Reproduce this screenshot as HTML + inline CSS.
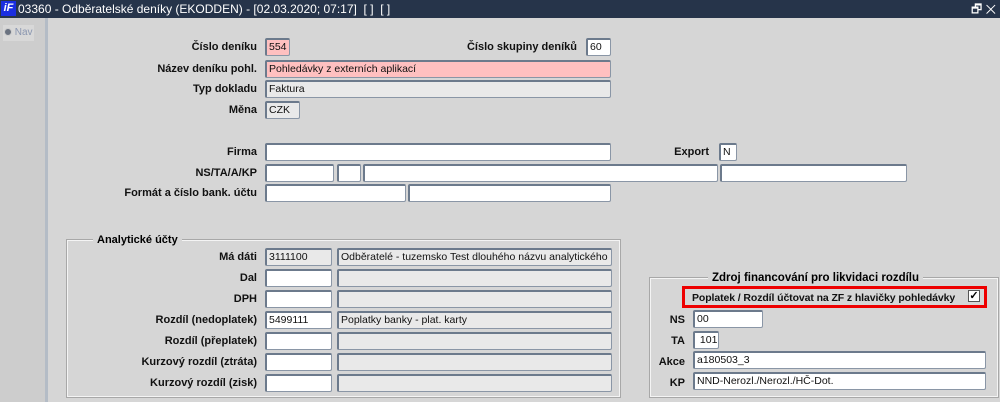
<!DOCTYPE html>
<html><head><meta charset="utf-8"><style>
*{margin:0;padding:0;box-sizing:border-box}
body{width:1000px;height:402px;background:#d6d6d6;position:relative;overflow:hidden;font-family:"Liberation Sans",Arial,sans-serif}
.t{position:absolute;left:0;top:0;width:1000px;height:18px;background:#26344a;color:#fff;font-size:12px;line-height:18px;padding-left:18px;white-space:nowrap}
.logo{position:absolute;left:1px;top:1px;width:15px;height:15px;background:#1a2ee0;color:#fff;font-weight:bold;font-style:italic;font-size:11px;line-height:15px;text-align:center;padding:0}
.nav{position:absolute;left:0;top:18px;width:48px;height:384px;background:#cdcdcd;border-right:3px solid #b4bcc6}
.l{position:absolute;font-size:11px;font-weight:bold;color:#111;text-align:right;white-space:nowrap;line-height:14px}
.i{position:absolute;height:18px;background:#fff;border:1px solid #8a96a6;border-top:2px solid #6c7a8c;border-left:2px solid #6c7a8c;border-radius:2px;font-size:10.5px;line-height:14px;padding-left:2px;white-space:nowrap;overflow:hidden;color:#111}
.g{background:#e9e9e9}.p{background:#ffc0c0}
.box{position:absolute;border:1px solid #f4f4f4;outline:1px solid #a8a8a8}
.gt{position:absolute;font-size:11px;font-weight:bold;background:#d6d6d6;padding:0 4px;line-height:13px}
</style></head><body>
<div class="t"><div class="logo">iF</div>03360 - Odběratelské deníky (EKODDEN) - [02.03.2020; 07:17] &nbsp;[ ] &nbsp;[ ]<span style="position:absolute;right:4px;top:0;font-size:12px">🗗 ✕</span></div>
<div class="nav"><div style="position:absolute;left:3px;top:7px;width:31px;height:16px;background:#d8d8d8;font-size:10px;color:#8a96b0;line-height:16px;padding-left:1px"><span style="display:inline-block;width:8px;height:8px;border-radius:50%;background:#6a7280;border:1px solid #ccc;vertical-align:-1px"></span> Nav</div></div>

<div class="l" style="right:743px;top:40px">Číslo deníku</div>
<div class="i p" style="left:265px;top:38px;width:25px">554</div>
<div class="l" style="right:423px;top:40px">Číslo skupiny deníků</div>
<div class="i" style="left:586px;top:38px;width:25px">60</div>
<div class="l" style="right:743px;top:62px">Název deníku pohl.</div>
<div class="i p" style="left:265px;top:60px;width:346px">Pohledávky z externích aplikací</div>
<div class="l" style="right:743px;top:82px">Typ dokladu</div>
<div class="i g" style="left:265px;top:80px;width:346px">Faktura</div>
<div class="l" style="right:743px;top:103px">Měna</div>
<div class="i g" style="left:265px;top:101px;width:35px">CZK</div>

<div class="l" style="right:743px;top:145px">Firma</div>
<div class="i" style="left:265px;top:143px;width:346px"></div>
<div class="l" style="right:291px;top:145px">Export</div>
<div class="i" style="left:719px;top:143px;width:18px">N</div>
<div class="l" style="right:743px;top:166px">NS/TA/A/KP</div>
<div class="i" style="left:265px;top:164px;width:69px"></div>
<div class="i" style="left:337px;top:164px;width:24px"></div>
<div class="i" style="left:363px;top:164px;width:355px"></div>
<div class="i" style="left:720px;top:164px;width:187px"></div>
<div class="l" style="right:743px;top:186px">Formát a číslo bank. účtu</div>
<div class="i" style="left:265px;top:184px;width:141px"></div>
<div class="i" style="left:408px;top:184px;width:203px"></div>

<div class="box" style="left:67px;top:240px;width:553px;height:157px"></div>
<div class="gt" style="left:93px;top:234px">Analytické účty</div>
<div class="l" style="right:743px;top:250px">Má dáti</div>
<div class="i g" style="left:265px;top:248px;width:67px">3111100</div>
<div class="i g" style="left:337px;top:248px;width:275px">Odběratelé - tuzemsko Test dlouhého názvu analytického &nbsp;úč</div>
<div class="l" style="right:743px;top:271px">Dal</div>
<div class="i" style="left:265px;top:269px;width:67px"></div>
<div class="i g" style="left:337px;top:269px;width:275px"></div>
<div class="l" style="right:743px;top:292px">DPH</div>
<div class="i" style="left:265px;top:290px;width:67px"></div>
<div class="i g" style="left:337px;top:290px;width:275px"></div>
<div class="l" style="right:743px;top:313px">Rozdíl (nedoplatek)</div>
<div class="i" style="left:265px;top:311px;width:67px">5499111</div>
<div class="i g" style="left:337px;top:311px;width:275px">Poplatky banky - plat. karty</div>
<div class="l" style="right:743px;top:334px">Rozdíl (přeplatek)</div>
<div class="i" style="left:265px;top:332px;width:67px"></div>
<div class="i g" style="left:337px;top:332px;width:275px"></div>
<div class="l" style="right:743px;top:355px">Kurzový rozdíl (ztráta)</div>
<div class="i" style="left:265px;top:353px;width:67px"></div>
<div class="i g" style="left:337px;top:353px;width:275px"></div>
<div class="l" style="right:743px;top:376px">Kurzový rozdíl (zisk)</div>
<div class="i" style="left:265px;top:374px;width:67px"></div>
<div class="i g" style="left:337px;top:374px;width:275px"></div>

<div class="box" style="left:650px;top:278px;width:348px;height:119px"></div>
<div class="gt" style="left:708px;top:272px;font-size:11.5px">Zdroj financování pro likvidaci rozdílu</div>
<div style="position:absolute;left:682px;top:286px;width:305px;height:22px;border:3px solid #ee0000"></div>
<div class="l" style="left:692px;top:291px;font-size:10.5px;letter-spacing:-0.1px">Poplatek / Rozdíl účtovat na ZF z hlavičky pohledávky</div>
<div style="position:absolute;left:968px;top:290px;width:12px;height:12px;background:#fff;border:1px solid #555;font-size:11px;line-height:10px;text-align:center;font-weight:bold">✓</div>
<div class="l" style="right:315px;top:313px">NS</div>
<div class="i" style="left:693px;top:310px;width:70px">00</div>
<div class="l" style="right:315px;top:334px">TA</div>
<div class="i" style="left:693px;top:331px;width:26px">&nbsp;101</div>
<div class="l" style="right:315px;top:355px">Akce</div>
<div class="i" style="left:693px;top:351px;width:293px">a180503_3</div>
<div class="l" style="right:315px;top:376px">KP</div>
<div class="i" style="left:693px;top:372px;width:293px">NND-Nerozl./Nerozl./HČ-Dot.</div>
</body></html>
